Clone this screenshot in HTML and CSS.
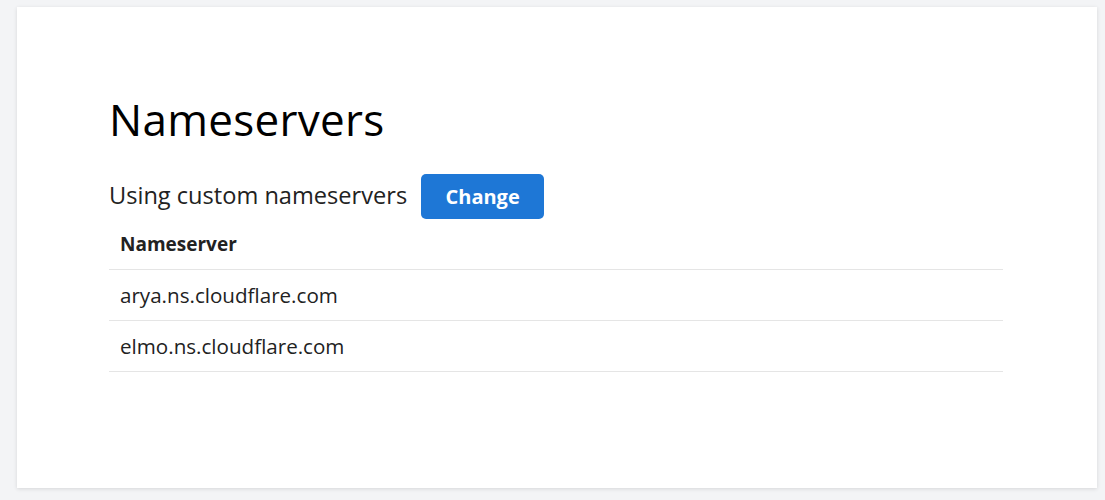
FILE: index.html
```html
<!DOCTYPE html>
<html lang="en">
<head>
<meta charset="utf-8">
<title>Nameservers</title>
<link rel="stylesheet" href="styles.css">
</head>
<body>
<section class="card">
  <h1 class="title">Nameservers</h1>
  <div class="status">
    <span class="status-text">Using custom nameservers</span>
    <button class="btn">Change</button>
  </div>
  <table class="ns-table">
    <thead>
      <tr><th>Nameserver</th></tr>
    </thead>
    <tbody>
      <tr><td>arya.ns.cloudflare.com</td></tr>
      <tr><td>elmo.ns.cloudflare.com</td></tr>
    </tbody>
  </table>
</section>
</body>
</html>
```
FILE: styles.css
```css
html, body {
  margin: 0;
  padding: 0;
}
body {
  background: #f3f4f6;
  font-family: "Open Sans", "Liberation Sans", sans-serif;
  color: #222;
  padding: 7px 8px 12px 17px;
  height: 500px;
  box-sizing: border-box;
}
.card {
  background: #fff;
  width: 1080px;
  height: 481px;
  box-sizing: border-box;
  padding: 86px 94px 0 92px;
  box-shadow: 0 1px 4px rgba(0,0,0,0.12);
}
.title {
  margin: 0;
  font-weight: 400;
  font-size: 44px;
  line-height: 52px;
  color: #000;
  letter-spacing: 0.3px;
}
.status {
  display: flex;
  align-items: center;
  gap: 14px;
  margin-top: 29px;
}
.status-text {
  font-size: 23.6px;
  color: #222;
  padding-bottom: 4px;
}
.btn {
  background: #1e77d6;
  color: #fff;
  border: none;
  border-radius: 5px;
  width: 123px;
  height: 45px;
  font-family: "Open Sans", "Liberation Sans", sans-serif;
  font-weight: 700;
  font-size: 20px;
  padding: 0;
}
.ns-table {
  width: 894px;
  border-collapse: collapse;
  margin-top: 0;
}
.ns-table th, .ns-table td {
  text-align: left;
  padding: 0 11px;
  height: 50px;
  border-bottom: 1px solid #e5e5e5;
  font-size: 20.6px;
  color: #222;
}
.ns-table th {
  font-weight: 700;
  font-size: 19px;
}
```
